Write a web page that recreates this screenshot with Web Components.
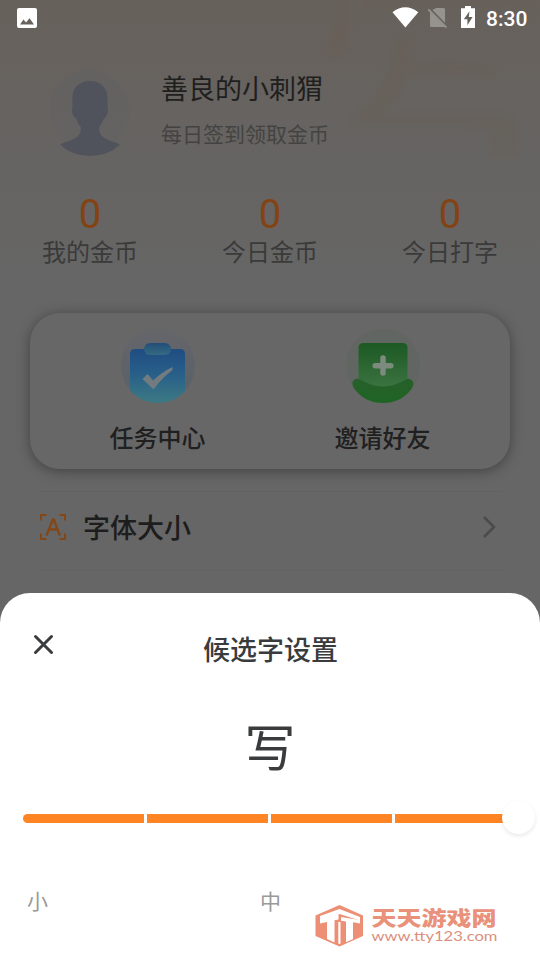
<!DOCTYPE html>
<html lang="zh-CN">
<head>
<meta charset="utf-8">
<title>候选字设置</title>
<style>
html,body{margin:0;padding:0;background:#666}
body{width:540px;height:960px;overflow:hidden;font-family:Roboto,"Noto Sans CJK SC",sans-serif}
</style>
</head>
<body>
<app-screen>
  <status-bar slot="status" time="8:30"></status-bar>
  <profile-header name="善良的小刺猬" note="每日签到领取金币"></profile-header>
  <stat-row>
    <stat-item value="0">我的金币</stat-item>
    <stat-item value="0">今日金币</stat-item>
    <stat-item value="0">今日打字</stat-item>
  </stat-row>
  <action-card>
    <action-tile icon="task">任务中心</action-tile>
    <action-tile icon="invite">邀请好友</action-tile>
  </action-card>
  <menu-row>字体大小</menu-row>
  <bottom-sheet slot="sheet" heading="候选字设置">
    <size-slider sample="写"></size-slider>
    <site-mark></site-mark>
  </bottom-sheet>
</app-screen>
<script>
const define = (name, render) => customElements.define(name, class extends HTMLElement {
  constructor() {
    super();
    this.attachShadow({mode: 'open'});
  }
  connectedCallback() {
    this.shadowRoot.innerHTML = render(this);
  }
});
const attr = (el, n) => el.getAttribute(n) || '';

define('app-screen', () => `
<style>
:host{display:flex;flex-direction:column;position:relative;width:540px;height:960px;overflow:hidden;
background:linear-gradient(180deg,#67615c 0,#67625e 60px,#666462 150px,#666564 220px,#666 290px)}
.deco{position:absolute;left:0;top:0}
main{display:flex;flex-direction:column;height:557px;flex:none;position:relative}
slot[name=status]{display:block;position:relative}
slot[name=sheet]{display:block;position:relative}
</style>
<svg class="deco" width="540" height="200" viewBox="0 0 540 200">
<defs><filter id="b" x="-20%" y="-20%" width="140%" height="140%"><feGaussianBlur stdDeviation="3"/></filter></defs>
<g fill="#6b5c4e" opacity=".22" filter="url(#b)">
<path d="M336 0h12v42q-2 14-12 16-13-2-11-12 11-16 11-46z"/>
<path d="M362 0h178v6H362z"/>
<path d="M396 38h14v27q52-6 86 5l-2 7q-50-7-88-4-5 24-22 42 60-4 124 0l10 10v32h-28v-28q-60-8-138-1l2-12q30-24 38-54z"/>
</g></svg>
<slot name="status"></slot><main><slot></slot></main><slot name="sheet"></slot>`);

define('status-bar', el => `
<style>
:host{display:flex;justify-content:space-between;height:36px;color:#fff}
.r{display:flex;font:500 21px/38px Roboto,sans-serif}
svg{display:block}
span{width:54px}
</style>
<svg width="50" height="36" viewBox="0 0 50 36"><path fill="#fff" fill-rule="evenodd" d="M19 8h16q2 0 2 2v16q0 2-2 2H19q-2 0-2-2V10q0-2 2-2zM20 24.500h14l-4.500-6.300-3.500 4.200-2.500-2.800z"/></svg>
<div class="r"><svg width="96" height="36" viewBox="390 0 96 36">
<path fill="#fff" d="M392.500 12.200q12.800-9.800 25.800 0L405.400 27.500z"/>
<path fill="#96938f" d="M436 8h7.500q1.500 0 1.500 1.500v13.800L432.200 10.500z M430 12 444.300 26.500 444 27H431.500q-1.500 0-1.500-1.500z"/>
<path fill="#96938f" d="M433 9h10.500q1.500 0 1.500 1.500V24z"/>
<path stroke="#67625e" stroke-width="1.600" d="m430 8.500 17 17.500"/>
<path stroke="#96938f" stroke-width="1.800" d="m428.300 9.500 18 18"/>
<path fill="#fff" fill-rule="evenodd" d="M465 6h6v2.300h4V28h-14V8.300h4zM469.500 11.300l-5.700 8h3.600v6l5.200-8.300h-3.800z"/>
</svg><span>${attr(el,'time')}</span></div>`);

define('profile-header', el => `
<style>
:host{display:flex;padding:30px 0 0 45px;gap:26px;height:128px;box-sizing:border-box}
svg{flex:none}
h1,p{margin:0;font-weight:400}
h1{font-size:27px;line-height:40px;color:#1f1f1e;padding-top:4px}
p{font-size:21px;line-height:30px;color:#444341;padding-top:10px}
</style>
<svg width="90" height="90" viewBox="0 0 90 90"><circle cx="44" cy="44" r="40" fill="#636363" opacity=".6"/>
<path fill="#50535c" d="M45 15c-12 0-18 8-17.500 17v8c-1.500 8 1.500 11 4 13 1 4 2 6 4 7 1 7-1 9-5 12-5 3-11 4-15.500 6.500Q27 90 45 90t30-11.500c-4.500-2.500-10.500-3.500-15.500-6.500-4-3-6-5-5-12 2-1 3-4 4-7 2.500-2 5.500-5 4-13v-8C62.500 23 57 15 45 15z"/></svg>
<div><h1>${attr(el,'name')}</h1><p>${attr(el,'note')}</p></div>`);

define('stat-row', () => `
<style>:host{display:grid;grid-template-columns:repeat(3,1fr);height:113px;padding-top:27px;box-sizing:content-box}</style><slot></slot>`);
define('stat-item', el => `
<style>
:host{display:flex;flex-direction:column;align-items:center;font-size:24px;line-height:34px;color:#3a3a3a}
b{font:400 40px/48px Roboto,sans-serif;color:#834313;margin-bottom:-3px}
</style><b>${attr(el,'value')}</b><span><slot></slot></span>`);

define('action-card', () => `
<style>
:host{display:grid;grid-template-columns:1fr 1fr;box-sizing:border-box;margin:9px 30px 0;height:156px;padding:0 15px;flex:none;
border-radius:30px;background:#676767;box-shadow:0 2px 13px rgba(0,0,0,.36)}
</style><slot></slot>`);
const tiles = {
task: `<defs><linearGradient id="g" x2="0" y2="1"><stop stop-color="#204d82"/><stop offset=".45" stop-color="#285f89"/><stop offset="1" stop-color="#3d7b83"/></linearGradient>
<linearGradient id="c" x2="0" y2="1"><stop stop-color="#65666a"/><stop offset="1" stop-color="#586068"/></linearGradient>
<linearGradient id="t" x2="0" y2="1"><stop stop-color="#234e78"/><stop offset="1" stop-color="#336b83"/></linearGradient><clipPath id="p"><circle cx="38" cy="37.500" r="37.500"/></clipPath></defs>
<circle cx="38" cy="37.500" r="37" fill="url(#c)"/><path clip-path="url(#p)" fill="url(#g)" d="M15 21h45q5 0 5 5v50H10V26q0-5 5-5z"/>
<rect x="24" y="15" width="27" height="12" rx="6" fill="url(#t)"/>
<path d="m22.500 51 5-5 5.500 6.500Q42 44 52.500 39v3Q42 50 33.500 61.500z" fill="#727b80"/>`,
invite: `<defs><linearGradient id="g" x2="0" y2="1"><stop stop-color="#1c5923"/><stop offset="1" stop-color="#3b7341"/></linearGradient>
<linearGradient id="h" x2="0" y2="1"><stop stop-color="#275f2a"/><stop offset="1" stop-color="#1f6425"/></linearGradient></defs>
<circle cx="38" cy="37.500" r="37" fill="#626662"/><path fill="url(#g)" d="M18.500 15h39q5 0 5 5v34q-10 5-24.500 5t-24.500-5V20q0-5 5-5z"/>
<path fill="url(#h)" d="M14 51q13 7.500 24 7.500T62 51q3-1 5 1.500 3 3-.5 8.500Q56 75 38 75T9.500 61Q5.500 55 9 52q2-2 5-1z"/>
<path stroke="#7d8b7e" stroke-width="5.500" stroke-linecap="round" d="M38 30v15M30.200 37.700h15.600"/>`};
define('action-tile', el => `
<style>
:host{display:flex;flex-direction:column;align-items:center;font-size:24px;font-weight:500;line-height:36px;color:#202020;padding-top:15px}
svg{display:block;margin-bottom:17px}
</style><svg width="76" height="76" viewBox="0 0 76 76" fill="none">${tiles[attr(el,'icon')]}</svg><span><slot></slot></span>`);

define('menu-row', () => `
<style>
:host{display:flex;align-items:center;box-sizing:border-box;margin:22px 37px 0;height:80px;flex:none;padding:0 4px 8px 0;
border:solid #626262;border-width:1px 0;font-size:27px;font-weight:500;color:#1d1d1d}
span{flex:1;padding:3px 0 0 14px;line-height:40px}
</style>
<svg width="32" height="32" viewBox="0 0 32 32" fill="none" stroke="#834617" stroke-width="2"><path d="M4 9.500V4h5.500M22.500 4H28v5.500M4 22.500V28h5.500M22.500 28H28v-5.500"/><path stroke-width="2.300" stroke-linejoin="round" d="M9.500 24.500 16 8.500h.8l6 16M12 18.500h9"/></svg>
<span><slot></slot></span>
<svg width="20" height="24" viewBox="0 -1 20 24" fill="none" stroke="#4b4b4b" stroke-width="2.500"><path d="m5 1 10 10L5 21"/></svg>`);

define('bottom-sheet', el => `
<style>
:host{display:flex;flex-direction:column;height:367px;background:#fff;border-radius:30px 30px 0 0;color:#393b3d;position:relative}
header{display:grid;grid-template-columns:87px 1fr 87px;height:112px}
svg{margin:40px 0 0 32px}
h2{margin:0;text-align:center;font-size:27px;font-weight:500;line-height:40px;padding:38px 0 0 1px}
</style>
<header><svg width="24" height="24" viewBox="0 0 24 24" stroke="#393b3d" stroke-width="3" stroke-linecap="round"><path d="m3.500 3.500 16 16m0-16-16 16"/></svg><h2>${attr(el,'heading')}</h2></header>
<slot></slot>`);

define('size-slider', el => `
<style>
:host{display:block;height:216px}
.s{font-size:51px;line-height:72px;text-align:center;color:#393b3d;padding-top:9px;height:100px}
.t{display:flex;gap:3px;margin:0 5px 0 23px;height:9px;align-items:center}
i{width:121px;height:9px;background:#ff8423;flex:none}
i:first-child{border-radius:4.500px 0 0 4.500px}
i:nth-child(4){width:112px}
.k{width:33px;height:33px;border-radius:50%;background:#fff;flex:none;margin:-3px 0 0 -8px;box-shadow:0 2px 4px rgba(0,0,0,.09)}
.l{display:flex;justify-content:space-between;margin:64px 259px 0 27px;font-size:21px;line-height:30px;color:#999}
</style>
<div class="s">${attr(el,'sample')}</div>
<div class="t"><i></i><i></i><i></i><i></i><div class="k"></div></div>
<div class="l"><span>小</span><span>中</span></div>`);

define('site-mark', () => `
<style>:host{position:absolute;left:312px;top:308px;width:190px;height:50px}svg{display:block}</style>
<svg width="190" height="50" viewBox="312 901 190 50">
<path fill="#ec8f75" d="m339.500 905 23.500 10.500v20.500l-23.500 10.500-24-10.500v-20.500z"/>
<path fill="#fff" d="m339.500 909 20.500 8v3.500l-20.500-6.500-19.500 5.500v-3.500z"/>
<path fill="#fff" d="m320 917 18.500-4.500v7l-4 .8v22.200l-7.500-3.500v-17l-7 1.500z"/>
<path fill="#fff" d="m341 917 19 3v3.500l-7-1.200V939l-7 3.300V921.500l-5-.8z"/>
<path fill="#fff" d="M338.300 922h2.200v21.500l-1 .5-1.200-.5z"/>
<text x="371.500" y="925.500" textLength="125" lengthAdjust="spacingAndGlyphs" font-family="'Noto Sans CJK SC',sans-serif" font-weight="900" font-size="20" fill="#e9917a">天天游戏网</text>
<text x="371.500" y="941" textLength="126" lengthAdjust="spacingAndGlyphs" font-family="Lato,sans-serif" font-size="13.500" fill="#dc8f7c">www.tty123.com</text>
</svg>`);
</script>
</body>
</html>
